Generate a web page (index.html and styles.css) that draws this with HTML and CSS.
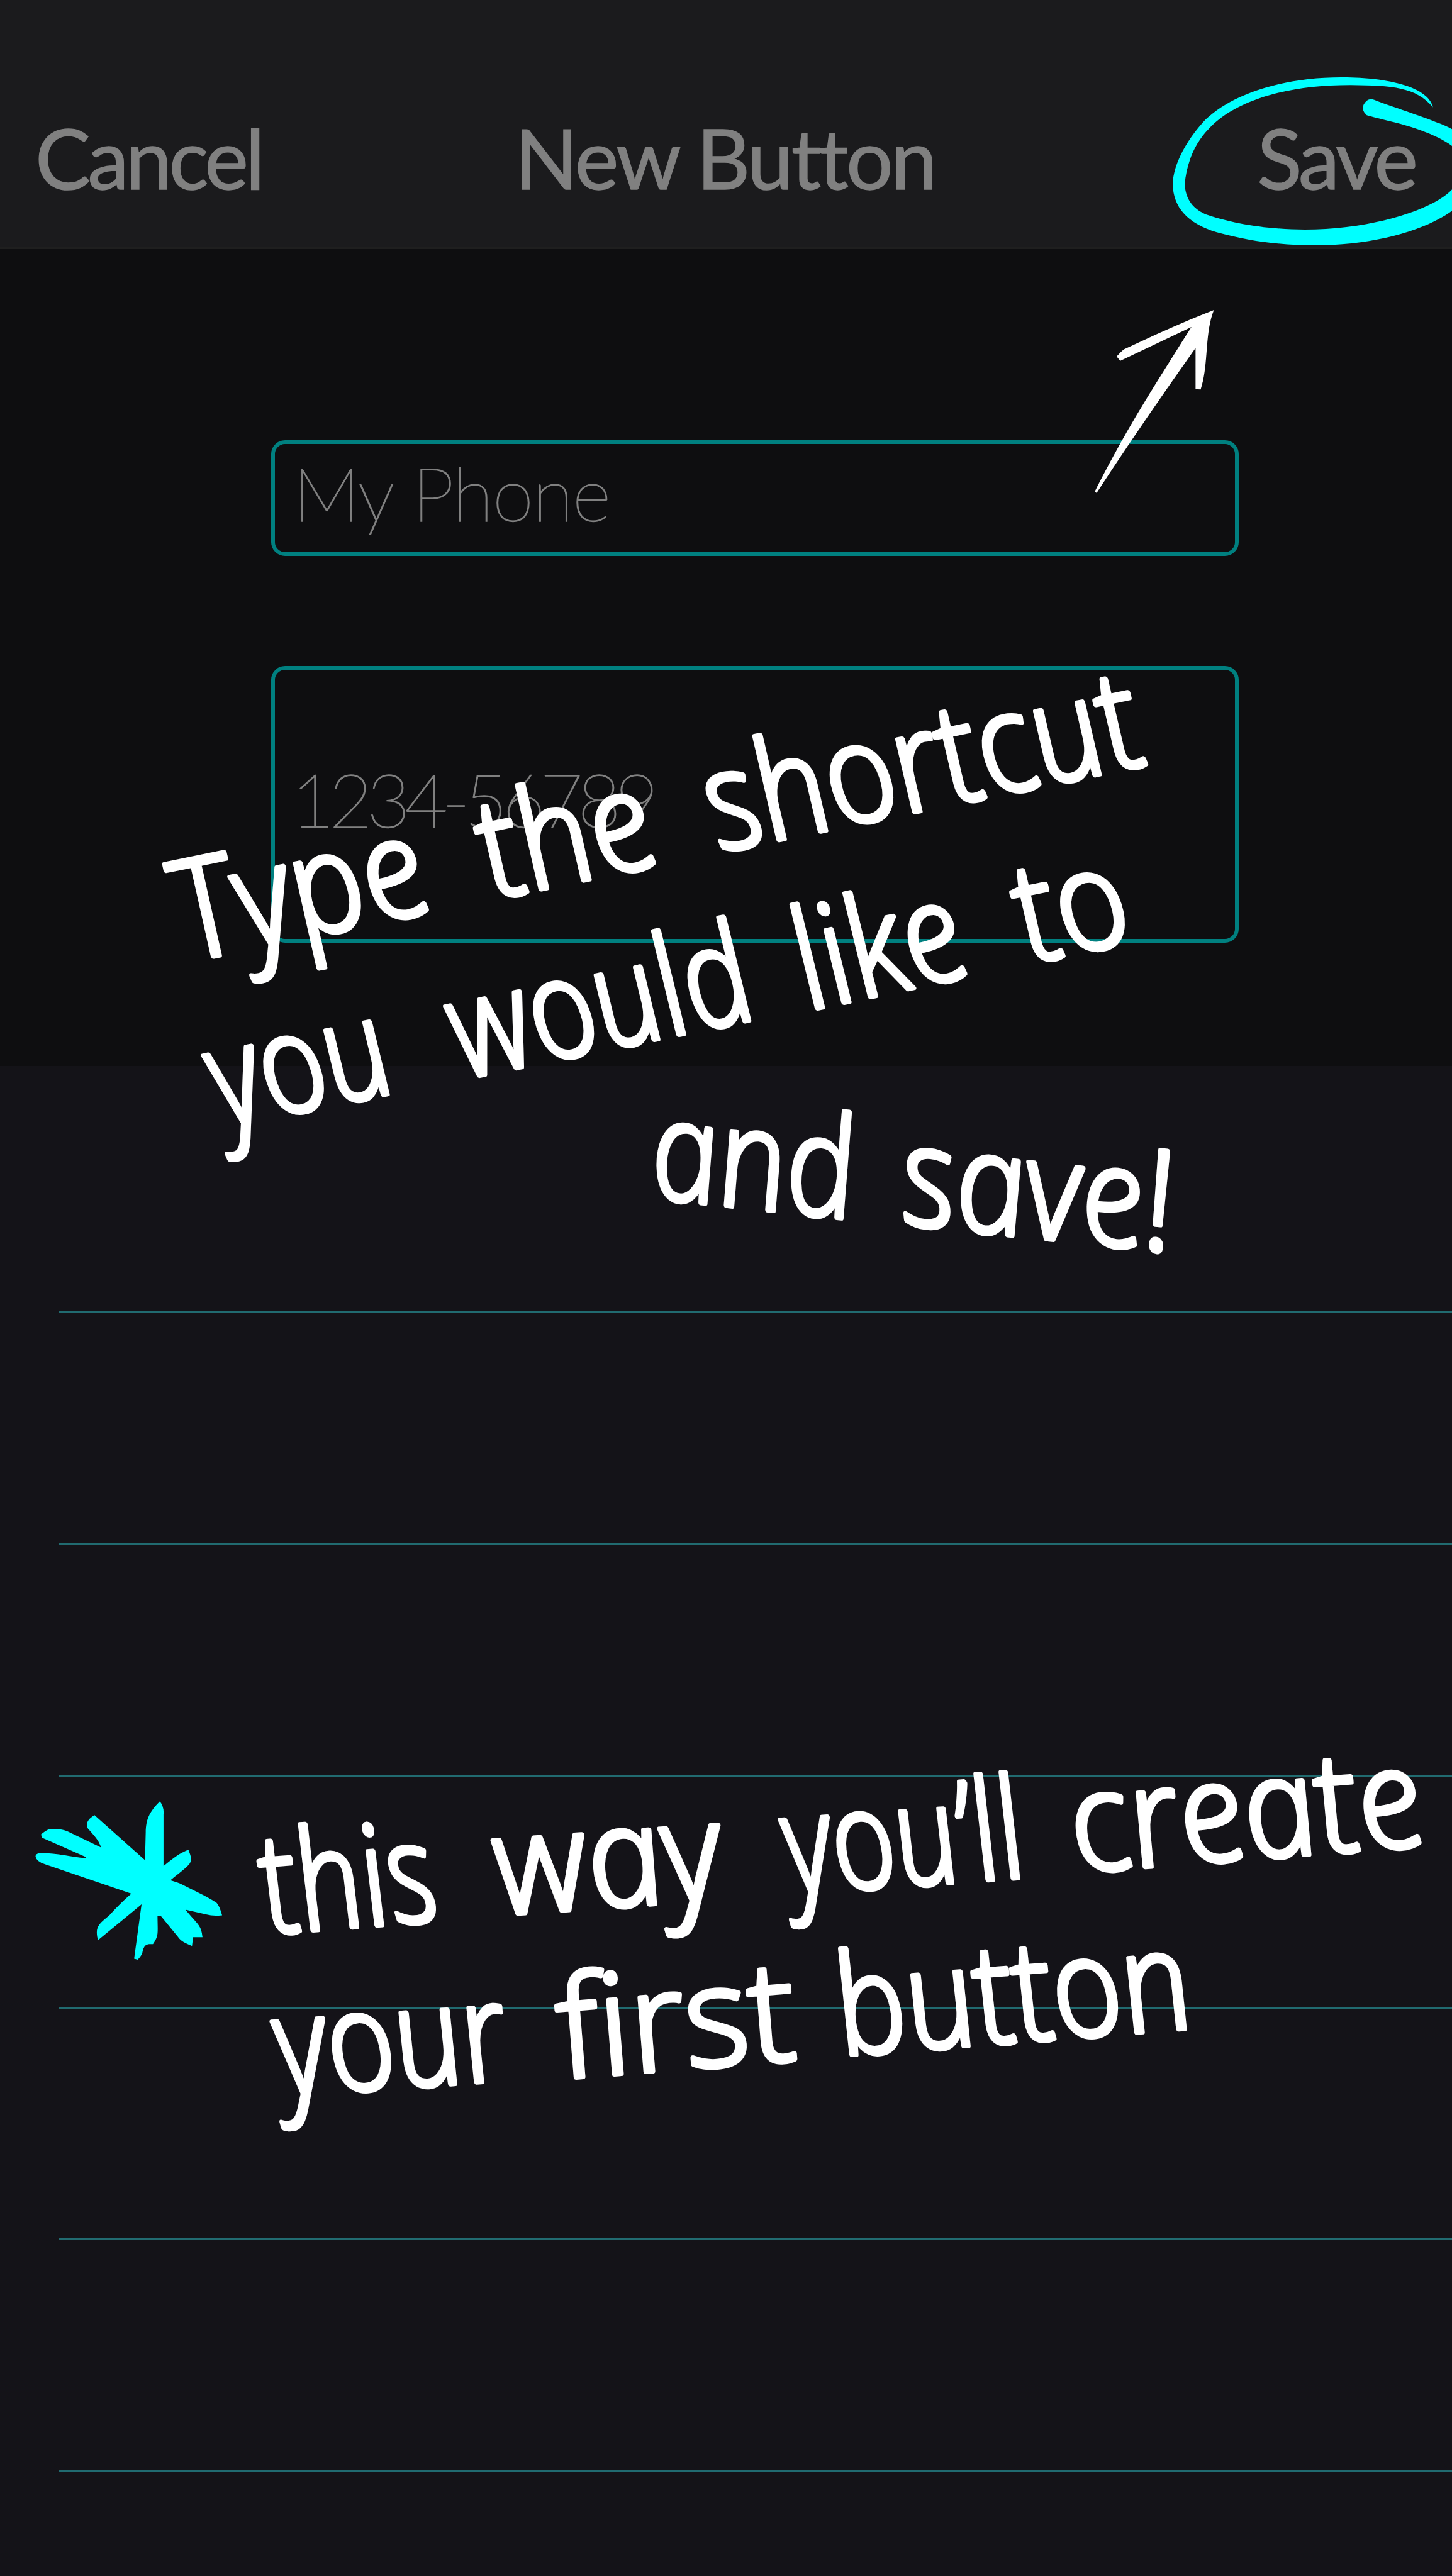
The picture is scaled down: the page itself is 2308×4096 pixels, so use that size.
FILE: index.html
```html
<!DOCTYPE html>
<html lang="en">
<head>
<meta charset="utf-8">
<title>New Button</title>
<link rel="stylesheet" href="styles.css">
</head>
<body>
<div class="screen">
  <header class="navbar">
    <span class="nav-item nav-cancel">Cancel</span>
    <span class="nav-item nav-title">New Button</span>
    <span class="nav-item nav-save">Save</span>
  </header>
  <main class="form">
    <div class="field field-name"><span>My Phone</span></div>
    <div class="field field-code"><span>1234-56789</span></div>
  </main>
  <section class="list">
    <div class="row row-first"></div>
    <div class="row"></div>
    <div class="row"></div>
    <div class="row"></div>
    <div class="row"></div>
    <div class="row"></div>
  </section>
  <svg class="coach" viewBox="0 0 2667 4733" preserveAspectRatio="none">
    <path class="accent" transform="translate(1333 100) scale(.8508 .33333)" d="M1527 292C1518 180 1430 125 1330 126C1200 125 1085 225 1030 375C990 490 965 620 965 720C967 840 995 930 1060 980C1130 1030 1200 1052 1270 1052C1400 1052 1510 970 1568 862C1640 720 1640 540 1568 412C1530 360 1450 300 1400 250Q1391 241 1384 255Q1367 295 1384 335C1430 370 1510 400 1568 504C1610 570 1610 670 1568 744C1530 850 1400 965 1250 965C1170 965 1090 930 1035 880C1000 840 992 770 991 715C995 600 1012 490 1043 410C1100 255 1210 168 1350 169C1440 172 1490 180 1527 292Z"/>
    <path class="ink" transform="translate(1950 530) scale(.33333)" d="M839 119C660 188 500 262 345 335Q335 340 303 375L323 399L715 213C540 490 340 800 182 1121L193 1127C360 870 560 580 738 328V555L766 557C812 420 786 250 839 119Z"/>
    <path class="accent" transform="translate(30 3280) scale(.33333)" d="M791 89C730 150 715 190 713 260L709 413L431 165C385 190 380 225 400 245C440 290 450 300 468 344L295 261C260 243 220 239 185 242Q170 245 136 271L141 289L383 396L381 402C300 395 220 372 125 374Q105 380 106 393Q112 422 160 437L634 598C590 636 550 675 515 715C460 763 435 775 446 838L452 853L690 657L649 957L669 962Q690 938 694 925C704 870 725 876 753 876C785 830 779 820 778 723L794 718L890 835C908 862 935 872 968 886L974 838H1026C1018 770 1005 775 932 686L1050 713Q1080 722 1134 717Q1118 662 1104 649C1040 607 975 580 910 546Q890 536 849 524C880 497 910 477 935 454C975 420 965 400 948 355C900 377 890 382 811 446V160Q815 120 791 89Z"/>
    <g class="hand">
      <text transform="translate(354 1765) rotate(-11.6) skewX(12)" textLength="465" lengthAdjust="spacingAndGlyphs">Type</text>
      <text transform="translate(914 1650) rotate(-11.6) skewX(12)" textLength="319" lengthAdjust="spacingAndGlyphs">the</text>
      <text transform="translate(1329 1564) rotate(-11.6) skewX(12)" textLength="810" lengthAdjust="spacingAndGlyphs">shortcut</text>
      <text transform="translate(419 2070) rotate(-11.6) skewX(12)" textLength="330" lengthAdjust="spacingAndGlyphs">you</text>
      <text transform="translate(862 1980) rotate(-11.6) skewX(12)" textLength="556" lengthAdjust="spacingAndGlyphs">would</text>
      <text transform="translate(1494 1854) rotate(-12) skewX(12)" textLength="310" lengthAdjust="spacingAndGlyphs">like</text>
      <text transform="translate(1899 1768) rotate(-11.6) skewX(12)" textLength="203" lengthAdjust="spacingAndGlyphs">to</text>
      <text transform="translate(1204 2201) rotate(6.2) skewX(12)" textLength="376" lengthAdjust="spacingAndGlyphs">and</text>
      <text transform="translate(1663 2249) rotate(6) skewX(12)" textLength="502" lengthAdjust="spacingAndGlyphs">save!</text>
      <text transform="translate(501 3552) rotate(-4.4) skewX(12)" textLength="321" lengthAdjust="spacingAndGlyphs">this</text>
      <text transform="translate(930 3517) rotate(-4) skewX(12)" textLength="416" lengthAdjust="spacingAndGlyphs">way</text>
      <text transform="translate(1461 3479) rotate(-4) skewX(12)" textLength="440" lengthAdjust="spacingAndGlyphs">you’ll</text>
      <text transform="translate(1987 3439) rotate(-4.4) skewX(12)" textLength="648" lengthAdjust="spacingAndGlyphs">create</text>
      <text transform="translate(527 3850) rotate(-4) skewX(12)" textLength="425" lengthAdjust="spacingAndGlyphs">your</text>
      <text class="upright" transform="translate(1030 3819) rotate(-4.6)" textLength="438" lengthAdjust="spacingAndGlyphs">first</text>
      <text transform="translate(1557 3776) rotate(-4.5) skewX(12)" textLength="652" lengthAdjust="spacingAndGlyphs">button</text>
    </g>
  </svg>
</div>
</body>
</html>
```
FILE: styles.css
```css
* { box-sizing: border-box; }
body { margin: 0; background: #141318; }
.screen {
  position: relative;
  width: 2308px;
  height: 4096px;
  overflow: hidden;
  display: flex;
  flex-direction: column;
  font-family: Lato, "Liberation Sans", sans-serif;
  color: #808080;
}
.navbar {
  height: 396px;
  flex: none;
  display: grid;
  grid-template-columns: 1fr auto 1fr;
  padding: 170px 59px 0 56px;
  background: #1b1b1d;
  border-bottom: 4px solid #1f1f1f;
}
.nav-item {
  font-size: 132px;
  line-height: 160px;
  letter-spacing: -5px;
  white-space: nowrap;
  -webkit-text-stroke: 1.5px #808080;
}
.nav-title { letter-spacing: -3.5px; }
.nav-save { text-align: right; }
.form {
  height: 1299px;
  flex: none;
  padding: 304px 339px 0 431px;
  display: flex;
  flex-direction: column;
  gap: 175px;
  background: #0e0e10;
}
.field {
  display: flex;
  align-items: center;
  padding: 0 0 18px 29px;
  border: 6px solid #008080;
  border-radius: 22px;
  font-weight: 100;
  font-size: 119px;
  line-height: 140px;
  letter-spacing: -1.5px;
  white-space: nowrap;
  -webkit-text-stroke: 1.5px #808080;
}
.field-name { height: 184px; }
.field-code { height: 440px; padding-left: 26px; letter-spacing: -9px; }
.list { flex: 1; padding-left: 93px; background: #141318; }
.row { height: 368.6px; border-bottom: 3px solid #216b70; }
.row-first { height: 393px; }
.coach { position: absolute; inset: 0; width: 100%; height: 100%; }
.accent { fill: #00ffff; }
.ink { fill: #fff; }
.hand {
  fill: #fff;
  stroke: #fff;
  stroke-width: 9px;
  stroke-linejoin: round;
  font-family: "Open Sans", "Noto Sans", sans-serif;
  font-style: italic;
  font-weight: 300;
  font-size: 257px;
}
.upright { font-style: normal; }
```
